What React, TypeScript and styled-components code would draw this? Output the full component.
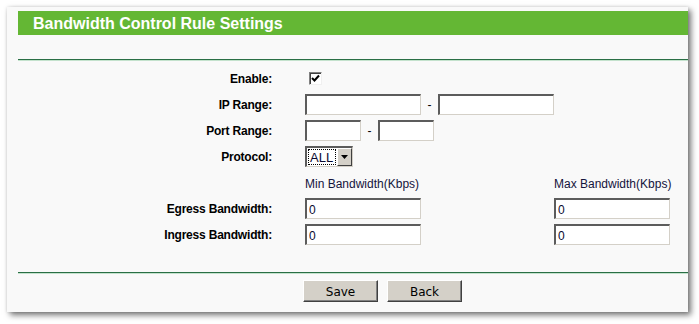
import React from "react";
import styled, { createGlobalStyle } from "styled-components";

const GlobalStyle = createGlobalStyle`
  html, body {
    margin: 0;
    padding: 0;
    background: #ffffff;
  }
  body {
    font-family: "Liberation Sans", Arial, sans-serif;
  }
`;

const Page = styled.div`
  width: 699px;
  height: 324px;
  padding: 7px 0 0 7px;
  box-sizing: border-box;
  background: #ffffff;
`;

const Panel = styled.div`
  width: 681px;
  height: 305px;
  box-sizing: border-box;
  padding: 4px 0 0 11px;
  background: #f9f9f9;
  box-shadow: 3px 3px 6px rgba(0, 0, 0, 0.55), 0 0 3px rgba(0, 0, 0, 0.12);
  display: flex;
  flex-direction: column;
`;

const TitleBar = styled.div`
  height: 24px;
  background: #64b734;
  color: #ffffff;
  font-size: 16px;
  font-weight: bold;
  line-height: 25px;
  padding-left: 15px;
`;

const Rule = styled.div<{ $top: number }>`
  margin-top: ${(p) => p.$top}px;
  height: 1px;
  background: #2a6f45;
  border-bottom: 1px solid #c4e2cd;
`;

const Form = styled.div`
  margin-top: 7px;
  display: grid;
  grid-template-columns: 254px 1fr;
  column-gap: 33px;
  row-gap: 5px;
  grid-auto-rows: 21px;
  align-items: center;
`;

const Label = styled.div`
  text-align: right;
  font-size: 12px;
  font-weight: bold;
  letter-spacing: -0.2px;
  color: #000;
`;

const Field = styled.div`
  display: flex;
  align-items: center;
  height: 21px;
`;

const Split = styled.div`
  display: grid;
  grid-template-columns: 249px auto;
  align-items: center;
`;

const Caption = styled.div`
  font-size: 12px;
  color: #14143c;
  padding-top: 3px;
`;

const TextInput = styled.input<{ $w: number }>`
  width: ${(p) => p.$w}px;
  height: 21px;
  box-sizing: border-box;
  margin: 0;
  padding: 1px 0 0 2px;
  background: #ffffff;
  border-style: solid;
  border-width: 2px 1px 1px 2px;
  border-color: #5c5c5c #d4d0c8 #d4d0c8 #5c5c5c;
  font-family: "Liberation Sans", Arial, sans-serif;
  font-size: 12px;
  color: #0a0a30;
  outline: none;
`;

const Dash = styled.span<{ $w: number }>`
  width: ${(p) => p.$w}px;
  text-align: center;
  font-size: 12px;
  color: #000;
`;

const CheckBox = styled.span`
  width: 13px;
  height: 13px;
  margin-left: 4px;
  box-sizing: border-box;
  border-style: solid;
  border-width: 1px;
  border-color: #808080 #f0f0f0 #f0f0f0 #808080;
  box-shadow: inset 1px 1px #404040;
  background: #ffffff;
  display: flex;
  align-items: center;
  justify-content: center;
`;

const Select = styled.div`
  width: 48px;
  height: 21px;
  box-sizing: border-box;
  border-style: solid;
  border-width: 2px 1px 1px 2px;
  border-color: #5c5c5c #d4d0c8 #d4d0c8 #5c5c5c;
  background: #ffffff;
  display: flex;
`;

const SelectValue = styled.span`
  flex: 1;
  margin: 1px;
  border: 1px dotted #000;
  font-size: 13px;
  line-height: 15px;
  padding-left: 1px;
  color: #0a0a30;
`;

const SelectArrow = styled.span`
  width: 15px;
  background: #d4d0c8;
  border-style: solid;
  border-width: 1px;
  border-color: #ffffff #404040 #404040 #ffffff;
  box-sizing: border-box;
  display: flex;
  align-items: center;
  justify-content: center;
`;

const Buttons = styled.div`
  margin-top: 6px;
  padding-left: 285px;
  display: flex;
  gap: 9px;
`;

const Button = styled.button`
  width: 75px;
  height: 22px;
  box-sizing: border-box;
  padding: 1px 0 0;
  background: #d4d0c8;
  border-style: solid;
  border-width: 1px;
  border-color: #ffffff #404040 #404040 #ffffff;
  box-shadow: inset -1px -1px #808080;
  font-family: "DejaVu Sans", Tahoma, sans-serif;
  font-size: 12px;
  color: #000;
`;

const App: React.FC = () => {
  return (
    <Page>
      <GlobalStyle />
      <Panel>
        <TitleBar>Bandwidth Control Rule Settings</TitleBar>
        <Rule $top={24} />
        <Form>
          <Label>Enable:</Label>
          <Field>
            <CheckBox>
              <svg width="9" height="9" viewBox="0 0 9 9">
                <path d="M1 4 L3.5 6.5 L8 1.5" stroke="#000" strokeWidth="2" fill="none" />
              </svg>
            </CheckBox>
          </Field>

          <Label>IP Range:</Label>
          <Field>
            <TextInput $w={116} />
            <Dash $w={17}>-</Dash>
            <TextInput $w={116} />
          </Field>

          <Label>Port Range:</Label>
          <Field>
            <TextInput $w={56} />
            <Dash $w={17}>-</Dash>
            <TextInput $w={56} />
          </Field>

          <Label>Protocol:</Label>
          <Field>
            <Select>
              <SelectValue>ALL</SelectValue>
              <SelectArrow>
                <svg width="7" height="4" viewBox="0 0 7 4">
                  <path d="M0 0 H7 L3.5 4 Z" fill="#000" />
                </svg>
              </SelectArrow>
            </Select>
          </Field>

          <div />
          <Split>
            <Caption>Min Bandwidth(Kbps)</Caption>
            <Caption>Max Bandwidth(Kbps)</Caption>
          </Split>

          <Label>Egress Bandwidth:</Label>
          <Split>
            <TextInput $w={116} defaultValue="0" />
            <TextInput $w={116} defaultValue="0" />
          </Split>

          <Label>Ingress Bandwidth:</Label>
          <Split>
            <TextInput $w={116} defaultValue="0" />
            <TextInput $w={116} defaultValue="0" />
          </Split>
        </Form>
        <Rule $top={27} />
        <Buttons>
          <Button>Save</Button>
          <Button>Back</Button>
        </Buttons>
      </Panel>
    </Page>
  );
};

export default App;
